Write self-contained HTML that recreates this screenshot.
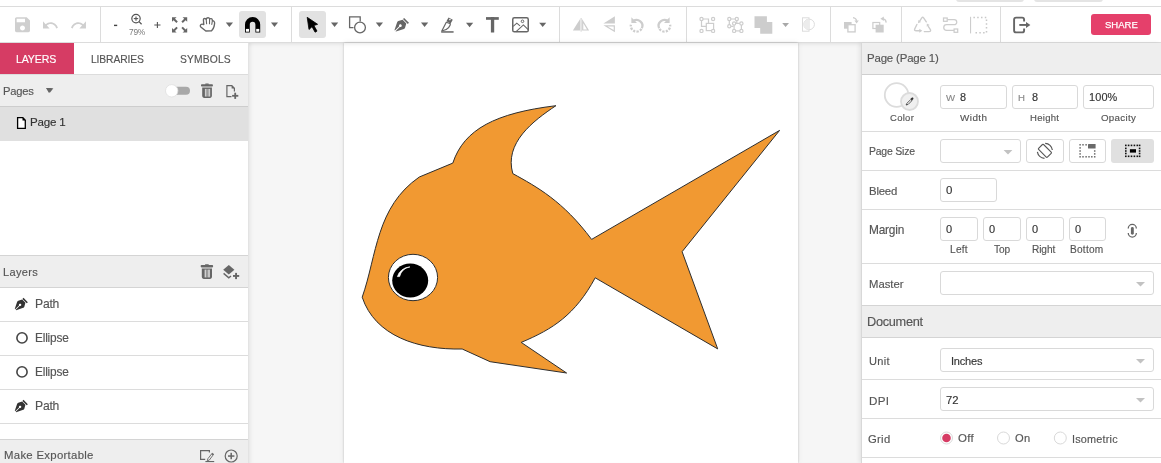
<!DOCTYPE html>
<html><head><meta charset="utf-8">
<style>
*{margin:0;padding:0;box-sizing:border-box}
html,body{width:1161px;height:463px;overflow:hidden;background:#fff;font-family:"Liberation Sans",sans-serif;color:#444}
.a{position:absolute}
.t{position:absolute;white-space:nowrap;line-height:1;will-change:transform;-webkit-text-stroke:0.15px currentColor}
.hl{position:absolute;height:1px;background:#dcdcdc}
.vl{position:absolute;width:1px;background:#dcdcdc}
.car{position:absolute;width:0;height:0;border-left:3.5px solid transparent;border-right:3.5px solid transparent;border-top:5px solid #666}
.inp{position:absolute;border:1px solid #d9d9d9;border-radius:3px;background:#fff}
.sel{position:absolute;border:1px solid #d9d9d9;border-radius:3px;background:#fff}
.sc{position:absolute;width:0;height:0;border-left:5px solid transparent;border-right:5px solid transparent;border-top:5px solid #bbb}
svg{position:absolute;overflow:visible}
</style></head><body>

<!-- top remnants -->
<div class="a" style="left:956px;top:-5px;width:68px;height:6.5px;border-radius:3px;background:#e4e4e4"></div>
<div class="a" style="left:1034px;top:-5px;width:69px;height:6.5px;border-radius:3px;background:#e4e4e4"></div>

<!-- toolbar -->
<div class="hl" style="left:0;top:6px;width:1161px"></div>
<div class="hl" style="left:0;top:42px;width:1161px"></div>
<div class="a" style="left:239px;top:11px;width:27px;height:27px;border-radius:3px;background:#e2e2e2"></div>
<div class="a" style="left:299px;top:11px;width:27px;height:27px;border-radius:3px;background:#e2e2e2"></div>
<div class="vl" style="left:100px;top:7px;height:35px"></div>
<div class="vl" style="left:291px;top:7px;height:35px"></div>
<div class="vl" style="left:559px;top:7px;height:35px"></div>
<div class="vl" style="left:686px;top:7px;height:35px"></div>
<div class="vl" style="left:830px;top:7px;height:35px"></div>
<div class="vl" style="left:901px;top:7px;height:35px"></div>
<div class="vl" style="left:1000px;top:7px;height:35px"></div>



<!-- left panel -->
<div class="a" style="left:0;top:43px;width:248px;height:420px;background:#fff"></div>
<div class="vl" style="left:248px;top:43px;height:420px;background:#e3e3e3"></div>
<div class="a" style="left:0;top:43px;width:74px;height:31px;background:#d63c64"></div>
<div class="hl" style="left:0;top:74px;width:248px"></div>
<div class="a" style="left:0;top:75px;width:248px;height:31px;background:#eeeeee"></div>
<div class="car" style="left:46px;top:88px;border-top-color:#666"></div>
<div class="hl" style="left:0;top:106px;width:248px;background:#cdcdcd"></div>
<div class="a" style="left:0;top:107px;width:248px;height:34px;background:#e0e0e0"></div>

<div class="hl" style="left:0;top:255px;width:248px;background:#d4d4d4"></div>
<div class="a" style="left:0;top:256px;width:248px;height:31px;background:#eeeeee"></div>
<div class="hl" style="left:0;top:287px;width:248px;background:#d4d4d4"></div>
<div class="hl" style="left:0;top:321px;width:248px"></div>
<div class="hl" style="left:0;top:355px;width:248px"></div>
<div class="hl" style="left:0;top:389px;width:248px"></div>
<div class="hl" style="left:0;top:423px;width:248px"></div>
<div class="hl" style="left:0;top:439px;width:248px;background:#d4d4d4"></div>
<div class="a" style="left:0;top:440px;width:248px;height:23px;background:#eeeeee"></div>

<!-- canvas -->
<div class="a" style="left:249px;top:43px;width:612px;height:420px;background:#f6f6f6"></div>
<div class="a" style="left:344px;top:43px;width:454px;height:420px;background:#fff;box-shadow:0 0 2px rgba(0,0,0,0.22),0 0 7px rgba(0,0,0,0.06)"></div>
<div class="a" style="left:249px;top:43px;width:612px;height:420px;box-shadow:inset 0 4px 4px -3px rgba(0,0,0,0.09),inset 4px 0 4px -3px rgba(0,0,0,0.08)"></div>
<svg width="1161" height="463" style="left:0;top:0" viewBox="0 0 1161 463">
<path d="M452.8 163.1 C464 129 496 113 555.9 105.7 C533 121 504 143 512.8 173.6 C537 187 563 201 591.6 239.4 L779.6 130.4 L682.1 251.7 L717.7 348.9 L595.2 277.8 C575 315 553 329 521.2 342.4 L566.6 373 L490.1 361.7 L462.2 349 C418 350 375 336 362.2 297.2 C377 255 376 207 419.3 177 Z" fill="#f19932" stroke="#2e2e2e" stroke-width="1" stroke-linejoin="miter"/>
<ellipse cx="413" cy="277.5" rx="24.6" ry="23.2" fill="#fff" stroke="#2e2e2e" stroke-width="1"/>
<ellipse cx="410.2" cy="280.5" rx="18" ry="17" fill="#000"/>
<path d="M397.4 276.6 A13.6 13.6 0 0 1 409.9 266.9 A13 13 0 0 0 399.6 276.6 Z" fill="#fff" stroke="#fff" stroke-width="0.7" stroke-linejoin="round"/>
</svg>

<!-- right panel -->
<div class="a" style="left:861px;top:43px;width:300px;height:420px;background:#fff;box-shadow:-2px 0 4px rgba(0,0,0,0.07)"></div>
<div class="vl" style="left:861px;top:43px;height:420px;background:#d8d8d8"></div>
<div class="a" style="left:862px;top:43px;width:299px;height:31px;background:#eeeeee"></div>
<div class="hl" style="left:862px;top:74px;width:299px;background:#cfcfcf"></div>

<div class="inp" style="left:940px;top:85px;width:67px;height:24px"></div>
<div class="inp" style="left:1012px;top:85px;width:66px;height:24px"></div>
<div class="inp" style="left:1083px;top:85px;width:71px;height:24px"></div>
<div class="hl" style="left:862px;top:131px;width:299px"></div>

<div class="sel" style="left:940px;top:139px;width:81px;height:24px"></div>
<div class="inp" style="left:1026px;top:139px;width:38px;height:24px"></div>
<div class="inp" style="left:1069px;top:139px;width:37px;height:24px"></div>
<div class="a" style="left:1111px;top:139px;width:43px;height:24px;border-radius:3px;background:#e0e0e0"></div>
<div class="hl" style="left:862px;top:170px;width:299px"></div>

<div class="inp" style="left:940px;top:178px;width:57px;height:24px"></div>
<div class="hl" style="left:862px;top:209px;width:299px"></div>

<div class="inp" style="left:940px;top:217px;width:38px;height:24px"></div>
<div class="inp" style="left:983px;top:217px;width:38px;height:24px"></div>
<div class="inp" style="left:1026px;top:217px;width:38px;height:24px"></div>
<div class="inp" style="left:1069px;top:217px;width:37px;height:24px"></div>
<div class="hl" style="left:862px;top:263px;width:299px"></div>

<div class="sel" style="left:940px;top:271px;width:214px;height:24px"></div>
<div class="hl" style="left:862px;top:305px;width:299px;background:#d4d4d4"></div>
<div class="a" style="left:862px;top:306px;width:299px;height:31px;background:#eeeeee"></div>
<div class="hl" style="left:862px;top:337px;width:299px;background:#d4d4d4"></div>

<div class="sel" style="left:940px;top:348px;width:214px;height:24px"></div>
<div class="hl" style="left:862px;top:379px;width:299px"></div>
<div class="sel" style="left:940px;top:387px;width:214px;height:24px"></div>
<div class="hl" style="left:862px;top:418px;width:299px"></div>
<div class="hl" style="left:862px;top:457px;width:299px"></div>

<!-- share -->
<div class="a" style="left:1091px;top:14px;width:60px;height:21px;border-radius:3px;background:#e5406b"></div>


<div class="t" style="left:16.15px;top:54.04px;font-size:10.58px;letter-spacing:-0.15px;color:#fff;">LAYERS</div>
<div class="t" style="left:91.38px;top:54.6px;font-size:10.29px;letter-spacing:-0.11px;color:#555;">LIBRARIES</div>
<div class="t" style="left:179.59px;top:54.6px;font-size:10.29px;letter-spacing:0.17px;color:#555;">SYMBOLS</div>
<div class="t" style="left:3.4px;top:85.83px;font-size:11.19px;letter-spacing:-0.2px;color:#555;">Pages</div>
<div class="t" style="left:30.23px;top:117.45px;font-size:11.57px;letter-spacing:-0.2px;color:#333;">Page 1</div>
<div class="t" style="left:3.41px;top:267.13px;font-size:11.07px;letter-spacing:0.30px;color:#555;">Layers</div>
<div class="t" style="left:34.63px;top:298.03px;font-size:12.13px;letter-spacing:-0.2px;color:#555;">Path</div>
<div class="t" style="left:34.65px;top:332.9px;font-size:11.87px;letter-spacing:-0.2px;color:#555;">Ellipse</div>
<div class="t" style="left:34.65px;top:366.9px;font-size:11.87px;letter-spacing:-0.2px;color:#555;">Ellipse</div>
<div class="t" style="left:34.63px;top:400.03px;font-size:12.13px;letter-spacing:-0.2px;color:#555;">Path</div>
<div class="t" style="left:3.79px;top:449.98px;font-size:11.37px;letter-spacing:0.30px;color:#555;">Make Exportable</div>
<div class="t" style="left:866.78px;top:53.41px;font-size:11.45px;letter-spacing:-0.17px;color:#555;">Page (Page 1)</div>
<div class="t" style="left:890.13px;top:113.10px;font-size:9.46px;letter-spacing:0.30px;color:#555;">Color</div>
<div class="t" style="left:946.3px;top:93.0px;font-size:9.6px;letter-spacing:0px;color:#888;">W</div>
<div class="t" style="left:960.4px;top:91.6px;font-size:10.9px;letter-spacing:0.00px;color:#333;">8</div>
<div class="t" style="left:1018.2px;top:93.0px;font-size:9.6px;letter-spacing:0px;color:#888;">H</div>
<div class="t" style="left:1032.4px;top:91.6px;font-size:10.9px;letter-spacing:0.00px;color:#333;">8</div>
<div class="t" style="left:1088.6px;top:91.6px;font-size:10.9px;letter-spacing:0.15px;color:#333;">100%</div>
<div class="t" style="left:960.1px;top:112.9px;font-size:9.9px;letter-spacing:0.45px;color:#555;">Width</div>
<div class="t" style="left:1029.74px;top:113.03px;font-size:9.53px;letter-spacing:0.30px;color:#555;">Height</div>
<div class="t" style="left:1101.01px;top:112.86px;font-size:9.73px;letter-spacing:0.30px;color:#555;">Opacity</div>
<div class="t" style="left:869.33px;top:147.26px;font-size:10.44px;letter-spacing:-0.2px;color:#555;">Page Size</div>
<div class="t" style="left:868.69px;top:185.8px;font-size:11.36px;letter-spacing:-0.2px;color:#555;">Bleed</div>
<div class="t" style="left:945.66px;top:185.11px;font-size:11.45px;letter-spacing:0.00px;color:#333;">0</div>
<div class="t" style="left:868.65px;top:224.74px;font-size:11.88px;letter-spacing:-0.2px;color:#555;">Margin</div>
<div class="t" style="left:945.67px;top:223.98px;font-size:11.01px;letter-spacing:0.00px;color:#333;">0</div>
<div class="t" style="left:988.67px;top:223.98px;font-size:11.01px;letter-spacing:0.00px;color:#333;">0</div>
<div class="t" style="left:1031.67px;top:223.98px;font-size:11.01px;letter-spacing:0.00px;color:#333;">0</div>
<div class="t" style="left:1074.67px;top:223.98px;font-size:11.01px;letter-spacing:0.00px;color:#333;">0</div>
<div class="t" style="left:949.89px;top:244.91px;font-size:10.14px;letter-spacing:0.26px;color:#555;">Left</div>
<div class="t" style="left:993.80px;top:244.91px;font-size:10.14px;letter-spacing:-0.09px;color:#555;">Top</div>
<div class="t" style="left:1032.39px;top:244.91px;font-size:10.14px;letter-spacing:-0.10px;color:#555;">Right</div>
<div class="t" style="left:1070.49px;top:244.91px;font-size:10.14px;letter-spacing:0.24px;color:#555;">Bottom</div>
<div class="t" style="left:868.70px;top:278.93px;font-size:11.30px;letter-spacing:0.00px;color:#555;">Master</div>
<div class="t" style="left:866.68px;top:316.4px;font-size:12.75px;letter-spacing:-0.30px;color:#555;">Document</div>
<div class="t" style="left:868.93px;top:355.65px;font-size:11.05px;letter-spacing:0.30px;color:#555;">Unit</div>
<div class="t" style="left:951.01px;top:355.68px;font-size:11.01px;letter-spacing:-0.19px;color:#333;">Inches</div>
<div class="t" style="left:868.6px;top:394.78px;font-size:11.61px;letter-spacing:0.30px;color:#555;">DPI</div>
<div class="t" style="left:945.9px;top:395px;font-size:11.3px;letter-spacing:0px;color:#333;">72</div>
<div class="t" style="left:868.24px;top:433.66px;font-size:11.27px;letter-spacing:0.30px;color:#555;">Grid</div>
<div class="t" style="left:958.24px;top:433.06px;font-size:11.51px;letter-spacing:0.30px;color:#555;">Off</div>
<div class="t" style="left:1015.05px;top:433.36px;font-size:11.15px;letter-spacing:0.30px;color:#555;">On</div>
<div class="t" style="left:1071.52px;top:433.60px;font-size:10.87px;letter-spacing:0.20px;color:#555;">Isometric</div>
<div class="t" style="left:1104.5px;top:20.2px;font-size:9.5px;letter-spacing:0.02px;color:#fff;-webkit-text-stroke:0.25px #fff;">SHARE</div>
<div class="t" style="left:128.8px;top:28.1px;font-size:8.4px;letter-spacing:-0.25px;color:#7a7a7a;-webkit-text-stroke:0">79%</div>
<svg width="1161" height="463" style="left:0;top:0;pointer-events:none" viewBox="0 0 1161 463">
<!-- save -->
<path transform="translate(12.5,14.7) scale(0.833)" fill="#cfcfcf" d="M17 3H5c-1.11 0-2 .9-2 2v14c0 1.1.89 2 2 2h14c1.1 0 2-.9 2-2V7l-4-4zm-5 16c-1.66 0-3-1.34-3-3s1.34-3 3-3 3 1.34 3 3-1.34 3-3 3zm3-10H5V5h10v4z"/>
<!-- undo -->
<path transform="translate(41.54,15.9) scale(0.73,0.78)" fill="#cfcfcf" d="M12.5 8c-2.65 0-5.05.99-6.9 2.6L2 7v9h9l-3.62-3.62c1.39-1.16 3.16-1.88 5.12-1.88 3.54 0 6.550 2.31 7.6 5.5l2.37-.78C21.08 11.03 17.15 8 12.5 8z"/>
<!-- redo -->
<path transform="translate(69.88,15.9) scale(0.73,0.78)" fill="#cfcfcf" d="M18.4 10.6C16.55 8.99 14.15 8 11.5 8c-4.65 0-8.58 3.030-9.96 7.22L3.9 16c1.05-3.19 4.05-5.5 7.6-5.5 1.95 0 3.73.72 5.12 1.88L13 16h9V7l-3.6 3.6z"/>
<!-- minus / zoom / plus -->
<rect x="114" y="24.7" width="3.2" height="1.4" fill="#444"/>
<circle cx="136" cy="18.6" r="4.2" fill="none" stroke="#555" stroke-width="1.2"/>
<line x1="139" y1="21.6" x2="141.6" y2="24.2" stroke="#555" stroke-width="1.3"/>
<line x1="133.8" y1="18.6" x2="138.2" y2="18.6" stroke="#555" stroke-width="1.1"/>
<line x1="136" y1="16.4" x2="136" y2="20.8" stroke="#555" stroke-width="1.1"/>
<line x1="154.3" y1="25" x2="160.5" y2="25" stroke="#555" stroke-width="1"/>
<line x1="157.4" y1="22" x2="157.4" y2="28" stroke="#555" stroke-width="1.1"/>
<!-- fullscreen -->
<g fill="#666">
<path d="M172 17.2h4.6l-1.6 1.6 2.8 2.8-1.4 1.4-2.8-2.8-1.6 1.6z"/>
<path d="M187.2 17.2h-4.6l1.6 1.6-2.8 2.8 1.4 1.4 2.8-2.8 1.6 1.6z"/>
<path d="M172 32.5h4.6l-1.6-1.6 2.8-2.8-1.4-1.4-2.8 2.8-1.6-1.6z"/>
<path d="M187.2 32.5h-4.6l1.6-1.6-2.8-2.8 1.4-1.4 2.8 2.8 1.6-1.6z"/>
</g>
<!-- hand -->
<path d="M203.8 24.6 L203.4 19.8 Q203.4 18.4 204.8 18.3 Q206 18.3 206.2 19.4 L206.3 18.8 Q206.6 17.7 208 17.7 Q209.4 17.8 209.6 19 Q210.2 18.5 211.2 18.7 Q212.4 19 212.4 20.5 Q213.2 20.8 213.9 21.3 Q214.8 22 214.6 23.4 L214.2 26 Q213.6 28.8 211.4 30.9 L205.8 31 L200.8 26.9 Q199.8 25.9 200.6 24.9 Q201.6 23.8 203 24.3 Z" fill="none" stroke="#666" stroke-width="1.35" stroke-linejoin="round"/>
<path d="M206.2 19.4 L206.6 23.8 M209.6 19 L209.5 23.8 M212.4 20.5 L211.8 24.4" fill="none" stroke="#666" stroke-width="1.1" stroke-linecap="round"/>
<!-- carets -->
<g fill="#666">
<path d="M225.8 22.6h7.2l-3.6 4.5z"/>
<path d="M271 22.6h7l-3.5 4.5z"/>
<path d="M331 22.6h7.2l-3.6 4.5z"/>
<path d="M375.8 22.6h7.2l-3.6 4.5z"/>
<path d="M421 22.6h7.2l-3.6 4.5z"/>
<path d="M466 22.8h7.2l-3.6 4.5z"/>
<path d="M539.2 22.8h7l-3.5 4.2z"/>
</g>
<path d="M782.2 22.9h6.8l-3.4 4.2z" fill="#a8a8a8"/>
<!-- magnet -->
<path d="M245 32.5 V24.6 A7.6 7.6 0 0 1 260.2 24.6 V32.5 H255.4 V24.6 A2.8 2.8 0 0 0 249.8 24.6 V32.5 Z" fill="#000"/>
<rect x="245.9" y="28.9" width="3.1" height="2.8" fill="#fff"/>
<rect x="256.2" y="28.9" width="3.1" height="2.8" fill="#fff"/>
<!-- select arrow -->
<path d="M307.2 17.3 L317.6 24.3 L313.9 25.5 L317 31.1 L315.1 32.2 L312 26.7 L309 29.5 Z" fill="#000" stroke="#000" stroke-width="0.8" stroke-linejoin="round"/>
<!-- shape -->
<path d="M353.5 27.6 H349.6 V16.9 H360.2 V21.6" fill="none" stroke="#666" stroke-width="1.3"/>
<circle cx="360" cy="27.5" r="5.4" fill="none" stroke="#666" stroke-width="1.3"/>
<!-- pen nib -->
<g transform="translate(394.5,17.1) scale(0.0283)">
<path fill="#666" transform="rotate(0)" d="M136.6 138.79a64.003 64.003 0 0 0-43.31 41.35L0 460l14.69 14.69L164.8 324.58c-2.99-6.26-4.8-13.18-4.8-20.58 0-26.51 21.49-48 48-48s48 21.49 48 48-21.490 48-48 48c-7.4 0-14.32-1.81-20.58-4.8L37.31 497.31 52 512l279.86-93.29a64.003 64.003 0 0 0 41.35-43.31L416 224 288 96l-151.4 42.79z"/>
<path fill="#666" d="M340 30 L510 200 L470 240 L300 70 Z"/>
</g>
<!-- knife -->
<g fill="none" stroke="#666" stroke-width="1.2" stroke-linejoin="round">
<path d="M446.3 22.3 L441.8 31 C444.5 30.6 447 29.6 448.6 27.6 C449.8 26.1 450.4 24.6 450.4 23.8 Z"/>
</g>
<path d="M448.6 17.4 L452.8 19.8 L450.6 23.6 L446.4 21.2 Z" fill="#666"/>
<circle cx="449.9" cy="19.6" r="0.8" fill="#fff"/>
<rect x="441.2" y="31.2" width="12.4" height="1.5" fill="#666"/>
<!-- T -->
<rect x="486" y="17.1" width="12.8" height="2.7" fill="#666"/>
<rect x="490.9" y="17.1" width="3.3" height="15.4" fill="#666"/>
<!-- image -->
<rect x="512.75" y="17.85" width="15.5" height="13.9" rx="1.6" fill="none" stroke="#666" stroke-width="1.5"/>
<path d="M513.2 26.3 L516.8 23.2 L520 25.9" fill="none" stroke="#666" stroke-width="1.1"/>
<path d="M515.8 31.8 L523.4 24.9 L528.2 29.6" fill="none" stroke="#666" stroke-width="1.1"/>
<circle cx="522.5" cy="21.3" r="1.3" fill="none" stroke="#666" stroke-width="1"/>
<!-- flip h -->
<g fill="#cdcdcd">
<path d="M572.9 30.6 L580.1 19 V30.6 Z"/>
<rect x="580.6" y="18" width="1" height="13.6"/>
<path d="M582.1 19 L589.1 30.6 H582.1 Z M583.3 23.2 V29.4 H587 Z" fill-rule="evenodd"/>
<!-- flip v -->
<path d="M603.4 23.4 L614.9 16.3 V23.4 Z"/>
<path d="M603.4 25.2 H614.9 V32.2 Z M607.6 26.4 L613.7 30.1 V26.4 Z" fill-rule="evenodd"/>
</g>
<!-- rotate ccw / cw -->
<g id="rot">
<path d="M633.27 21.05 A5.8 5.8 0 0 1 641.86 28.25" fill="none" stroke="#cdcdcd" stroke-width="2.3"/>
<path d="M641.86 28.25 A5.8 5.8 0 0 1 630.89 24.79" fill="none" stroke="#cdcdcd" stroke-width="2.3" stroke-dasharray="2.2 1.3" stroke-dashoffset="-0.8"/>
<path d="M631.4 17.3 V22.9 H637 Z" fill="#cdcdcd"/>
</g>
<g transform="translate(1301,0) scale(-1,1)">
<path d="M633.27 21.05 A5.8 5.8 0 0 1 641.86 28.25" fill="none" stroke="#cdcdcd" stroke-width="2.3"/>
<path d="M641.86 28.25 A5.8 5.8 0 0 1 630.89 24.79" fill="none" stroke="#cdcdcd" stroke-width="2.3" stroke-dasharray="2.2 1.3" stroke-dashoffset="-0.8"/>
<path d="M631.4 17.3 V22.9 H637 Z" fill="#cdcdcd"/>
</g>
<!-- group -->
<g fill="none" stroke="#cdcdcd" stroke-width="1.2">
<path d="M701.5 19 H708.5 V23.4 M701.5 19 V26.3 H706.3"/>
<rect x="706.3" y="23.4" width="7.3" height="7.2"/>
<circle cx="701.5" cy="19" r="1.6" fill="#fff"/>
<circle cx="713.1" cy="19" r="1.6" fill="#fff"/>
<circle cx="701.5" cy="30.9" r="1.6" fill="#fff"/>
<circle cx="713.1" cy="30.9" r="1.6" fill="#fff"/>
<!-- ungroup -->
<path d="M729.3 19 H736.8 V23 M729.3 19 V26.3 H733.5"/>
<rect x="734.1" y="23.4" width="7.3" height="7.5"/>
<circle cx="729.3" cy="19" r="1.6" fill="#fff"/>
<circle cx="736.8" cy="19" r="1.6" fill="#fff"/>
<circle cx="729.3" cy="26.3" r="1.6" fill="#fff"/>
<circle cx="734.1" cy="23.4" r="1.6" fill="#fff"/>
<circle cx="741.4" cy="23.4" r="1.6" fill="#fff"/>
<circle cx="734.1" cy="30.9" r="1.6" fill="#fff"/>
<circle cx="741.4" cy="30.9" r="1.6" fill="#fff"/>
</g>
<!-- boolean -->
<path d="M754.5 16.2 H766.9 V21.9 H772.3 V33.7 H760.2 V28 H754.5 Z" fill="#cdcdcd"/>
<!-- mask -->
<rect x="802.5" y="17.8" width="6.5" height="13.4" fill="none" stroke="#dcdcdc" stroke-width="1"/>
<circle cx="809.1" cy="24.4" r="5.3" fill="none" stroke="#dcdcdc" stroke-width="1"/>
<path d="M809.1 19.1 A5.3 5.3 0 0 0 809.1 29.7 Z" fill="#ececec"/>
<!-- bring front -->
<rect x="844" y="22" width="7.6" height="6.7" fill="#cdcdcd"/>
<rect x="847.9" y="24.7" width="7.2" height="7.2" fill="#fff" stroke="#cdcdcd" stroke-width="1.3"/>
<path d="M853 17.7 Q856.2 18.1 856.6 20.8" fill="none" stroke="#cdcdcd" stroke-width="1.2"/>
<path d="M854.4 20.4 L858.8 20.4 L856.6 23.4 Z" fill="#cdcdcd"/>
<!-- send back -->
<rect x="872.9" y="22.5" width="6.8" height="6" fill="#fff" stroke="#cdcdcd" stroke-width="1.2"/>
<rect x="875.6" y="24.7" width="8.1" height="7.8" fill="#cdcdcd"/>
<path d="M886.2 22.6 Q886 19.4 883 18.9" fill="none" stroke="#cdcdcd" stroke-width="1.2"/>
<path d="M880.4 18.7 L883.8 16.6 L883.8 20.9 Z" fill="#cdcdcd"/>
<!-- recycle -->
<g stroke="#cdcdcd" stroke-width="1.4" fill="none" stroke-linecap="round" stroke-linejoin="round">
<path d="M926.3 21.8 L923.6 17.8 Q922.7 16.6 921.8 17.8 L919.8 20.8"/>
<path d="M928.4 26.6 L930.4 29.6 Q931.2 31.6 928.9 31.6 L924.3 31.6"/>
<path d="M916.9 24.5 L914.7 29 Q914 30.7 916.2 30.7 L919.5 30.7"/>
</g>
<g fill="#cdcdcd">
<path d="M921.04 22.05 L918.36 19.95 L918.0 23.2 Z"/>
<path d="M929.66 25.0 L926.74 26.8 L926.8 23.4 Z"/>
<path d="M919.3 28.7 L919.3 32.7 L922.3 30.7 Z"/>
</g>
<!-- connector -->
<g fill="none" stroke="#cdcdcd" stroke-width="1.25">
<rect x="943.5" y="18" width="3.7" height="3.3"/>
<rect x="954.1" y="29" width="3.6" height="3.3"/>
<path d="M947.2 19.6 H954.2 A2.55 2.55 0 0 1 954.2 24.7 H946.6 A2.85 2.85 0 0 0 946.6 30.4 H954.1"/>
</g>
<!-- artboard -->
<rect x="970" y="16.8" width="1.1" height="16.6" fill="#cdcdcd"/>
<path d="M973.4 17.4 H986.5 V32.8 H973.4" fill="none" stroke="#c8c8c8" stroke-width="1.5" stroke-dasharray="1.5 2.3"/>
<!-- exit -->
<path d="M1024.1 21.6 V19.6 A2 2 0 0 0 1022.1 17.6 H1016.1 A2 2 0 0 0 1014.1 19.6 V30.4 A2 2 0 0 0 1016.1 32.4 H1022.1 A2 2 0 0 0 1024.1 30.4 V28.4" fill="none" stroke="#666" stroke-width="1.9"/>
<rect x="1019.3" y="24" width="7.5" height="1.9" fill="#666"/>
<path d="M1026 21.9 V27.9 L1030.4 24.9 Z" fill="#666"/>

<!-- left panel icons -->
<path d="M46.3 88.2 H53.4 L49.85 92.7 Z" fill="#666"/>
<rect x="170" y="86.8" width="20" height="8" rx="4" fill="#a8a8a8"/>
<circle cx="171.7" cy="90.8" r="6.2" fill="#fff" stroke="#dedede" stroke-width="0.8"/>
<!-- trash -->
<g id="trash">
<rect x="201" y="84.2" width="11.9" height="2.4" rx="0.8" fill="#666"/>
<path d="M202.2 87.6 H211.9 V95.6 C211.9 97 211.1 97.9 209.8 97.9 H204.3 C203 97.9 202.2 97 202.2 95.6 Z" fill="#666"/>
<rect x="204.9" y="88.9" width="1.8" height="7.6" fill="#d0d0d0"/>
<rect x="206.7" y="88.9" width="1.7" height="7.6" fill="#9a9a9a"/>
<rect x="208.4" y="88.9" width="1.8" height="7.6" fill="#d0d0d0"/>
<rect x="205.2" y="83.4" width="3.6" height="1.4" rx="0.5" fill="#666"/>
</g>
<!-- new page -->
<path d="M231.5 96.6 H226.9 V85.6 H231.8 L234.4 88.3 V91.6" fill="none" stroke="#666" stroke-width="1.2"/>
<path d="M231.6 85.2 L234.8 88.4 H231.6 Z" fill="#666"/>
<rect x="232.1" y="94.9" width="6.2" height="1.8" fill="#666"/>
<rect x="234.3" y="92.7" width="1.8" height="6.2" fill="#666"/>
<!-- doc -->
<path d="M17.6 117.6 H22.8 L25.3 120.2 V128.3 H17.6 Z" fill="#fff" stroke="#000" stroke-width="1.3" stroke-linejoin="miter"/>
<path d="M22.5 117 L25.9 120.5 H22.5 Z" fill="#000"/>
<!-- layers header trash -->
<rect x="200.7" y="265" width="12.4" height="2.4" rx="0.8" fill="#666"/>
<path d="M201.8 268.4 H212 V276.6 C212 278 211.2 278.9 209.9 278.9 H203.9 C202.6 278.9 201.8 278 201.8 276.6 Z" fill="#666"/>
<rect x="204.6" y="269.6" width="1.8" height="7.8" fill="#d0d0d0"/>
<rect x="206.4" y="269.6" width="1.7" height="7.8" fill="#9a9a9a"/>
<rect x="208.1" y="269.6" width="1.8" height="7.8" fill="#d0d0d0"/>
<rect x="205" y="264.2" width="3.8" height="1.4" rx="0.5" fill="#666"/>
<!-- layers add -->
<path d="M228.8 265.1 L234.4 269.8 L228.8 274.4 L223.2 269.8 Z" fill="#666"/>
<path d="M223.6 273.4 L228.8 277.8 L231 276" fill="none" stroke="#666" stroke-width="1.4"/>
<rect x="233" y="275" width="6.2" height="1.9" fill="#666"/>
<rect x="235.1" y="272.9" width="1.9" height="6.2" fill="#666"/>
<!-- layer rows -->
<g id="nib1" transform="translate(14.8,297.1) scale(0.0255)">
<path fill="#333" d="M136.6 138.79a64.003 64.003 0 0 0-43.31 41.35L0 460l14.69 14.69L164.8 324.58c-2.99-6.26-4.8-13.18-4.8-20.58 0-26.51 21.49-48 48-48s48 21.49 48 48-21.490 48-48 48c-7.4 0-14.32-1.81-20.58-4.8L37.31 497.31 52 512l279.86-93.29a64.003 64.003 0 0 0 41.35-43.31L416 224 288 96l-151.4 42.79z"/>
<path fill="#333" d="M340 30 L510 200 L470 240 L300 70 Z"/>
</g>
<circle cx="22" cy="337.9" r="5.1" fill="none" stroke="#444" stroke-width="1.6"/>
<circle cx="22" cy="371.9" r="5.1" fill="none" stroke="#444" stroke-width="1.6"/>
<g transform="translate(14.8,399.1) scale(0.0255)">
<path fill="#333" d="M136.6 138.79a64.003 64.003 0 0 0-43.31 41.35L0 460l14.69 14.69L164.8 324.58c-2.99-6.26-4.8-13.18-4.8-20.58 0-26.51 21.49-48 48-48s48 21.49 48 48-21.490 48-48 48c-7.4 0-14.32-1.81-20.58-4.8L37.31 497.31 52 512l279.86-93.29a64.003 64.003 0 0 0 41.35-43.31L416 224 288 96l-151.4 42.79z"/>
<path fill="#333" d="M340 30 L510 200 L470 240 L300 70 Z"/>
</g>
<!-- export icons -->
<path d="M205.2 459.4 H200.6 V450.6 H209.4 V452.6" fill="none" stroke="#666" stroke-width="1.2"/>
<path d="M212.2 453.2 L213.7 454.2 L209.4 460 L207.3 460.9 L207.8 458.8 Z" fill="none" stroke="#666" stroke-width="0.9" stroke-linejoin="round"/>
<path d="M212.2 453.2 L213.7 454.2 L212.9 455.3 L211.4 454.3 Z" fill="#666"/>
<rect x="205.4" y="461" width="8.8" height="1.1" fill="#666"/>
<circle cx="231.2" cy="456" r="6" fill="none" stroke="#666" stroke-width="1.2"/>
<rect x="228" y="455.3" width="6.4" height="1.5" fill="#666"/>
<rect x="230.45" y="452.8" width="1.5" height="6.4" fill="#666"/>

<!-- right panel icons -->
<circle cx="896.6" cy="95" r="11.8" fill="#fff" stroke="#dcdcdc" stroke-width="1.8"/>
<circle cx="909.5" cy="101.5" r="8.5" fill="#f0f0f0" stroke="#dcdcdc" stroke-width="1.8"/>
<g transform="translate(909.5,101.5) scale(0.82) translate(-909.5,-101.5)">
<path d="M905.3 105.8 L906.5 103.6 L911 99.1 L912.4 100.5 L907.9 105 Z" fill="#fff" stroke="#333" stroke-width="1" stroke-linejoin="round"/>
<path d="M910.6 98.4 L912.2 96.9 C912.7 96.4 913.5 96.4 914 96.9 C914.5 97.4 914.5 98.2 914 98.7 L912.5 100.3 Z" fill="#333"/>
</g>
<!-- page size carets -->
<path d="M1003.6 150 H1012.4 L1008 154.4 Z" fill="#c2c2c2"/>
<path d="M1136 282 H1145 L1140.5 286.4 Z" fill="#c2c2c2"/>
<path d="M1136 359 H1145 L1140.5 363.4 Z" fill="#c2c2c2"/>
<path d="M1136 398 H1145 L1140.5 402.4 Z" fill="#c2c2c2"/>
<!-- orientation -->
<g transform="translate(1044.9,150.8)">
<rect x="-3.5" y="-6.2" width="7" height="12.4" rx="0.8" transform="rotate(-45)" fill="none" stroke="#555" stroke-width="1.1"/>
<path d="M0.3 -7.5 A7.5 7.5 0 0 1 7.45 -0.8" fill="none" stroke="#555" stroke-width="1.2"/>
<path d="M-7.5 1.1 A7.5 7.5 0 0 0 -0.4 7.5" fill="none" stroke="#555" stroke-width="1.2"/>
</g>
<g fill="#6a6a6a"><rect x="1079.35" y="144.05" width="1.5" height="1.5"/><rect x="1082.25" y="144.05" width="1.5" height="1.5"/><rect x="1085.35" y="144.05" width="1.5" height="1.5"/><rect x="1079.35" y="147.15" width="1.5" height="1.5"/><rect x="1079.35" y="150.25" width="1.5" height="1.5"/><rect x="1079.35" y="153.15" width="1.5" height="1.5"/><rect x="1079.35" y="156.05" width="1.5" height="1.5"/><rect x="1082.25" y="156.05" width="1.5" height="1.5"/><rect x="1085.35" y="156.05" width="1.5" height="1.5"/><rect x="1088.25" y="156.05" width="1.5" height="1.5"/><rect x="1091.05" y="156.05" width="1.5" height="1.5"/><rect x="1093.95" y="156.05" width="1.5" height="1.5"/><rect x="1093.95" y="150.25" width="1.5" height="1.5"/><rect x="1093.95" y="153.15" width="1.5" height="1.5"/></g>
<rect x="1088" y="143.9" width="7.6" height="4.7" rx="0.5" fill="#6a6a6a"/>
<g fill="#111"><rect x="1125.00" y="144.60" width="1.6" height="1.6"/><rect x="1125.00" y="155.50" width="1.6" height="1.6"/><rect x="1127.80" y="144.60" width="1.6" height="1.6"/><rect x="1127.80" y="155.50" width="1.6" height="1.6"/><rect x="1130.70" y="144.60" width="1.6" height="1.6"/><rect x="1130.70" y="155.50" width="1.6" height="1.6"/><rect x="1133.60" y="144.60" width="1.6" height="1.6"/><rect x="1133.60" y="155.50" width="1.6" height="1.6"/><rect x="1136.50" y="144.60" width="1.6" height="1.6"/><rect x="1136.50" y="155.50" width="1.6" height="1.6"/><rect x="1138.80" y="144.60" width="1.6" height="1.6"/><rect x="1138.80" y="155.50" width="1.6" height="1.6"/><rect x="1125.00" y="147.60" width="1.6" height="1.6"/><rect x="1138.80" y="147.60" width="1.6" height="1.6"/><rect x="1125.00" y="150.20" width="1.6" height="1.6"/><rect x="1138.80" y="150.20" width="1.6" height="1.6"/><rect x="1125.00" y="152.70" width="1.6" height="1.6"/><rect x="1138.80" y="152.70" width="1.6" height="1.6"/></g>
<rect x="1129.9" y="149.2" width="6.1" height="3.4" fill="#000"/>
<!-- link -->
<path d="M1128.25 228.5 A4.05 4.05 0 0 1 1136.35 228.5" fill="none" stroke="#666" stroke-width="1.3"/>
<path d="M1128.25 233 A4.05 4.05 0 0 0 1136.35 233" fill="none" stroke="#666" stroke-width="1.3"/>
<rect x="1130.9" y="227" width="2.9" height="7.8" rx="1.45" fill="#666"/>
<!-- radios -->
<circle cx="946.5" cy="438" r="6" fill="#fff" stroke="#d8d8d8" stroke-width="1"/>
<circle cx="946.5" cy="438" r="4.3" fill="#d63c64"/>
<circle cx="1003.5" cy="438" r="6" fill="#fff" stroke="#d8d8d8" stroke-width="1"/>
<circle cx="1060.3" cy="438" r="6" fill="#fff" stroke="#d8d8d8" stroke-width="1"/>
</svg>

</body></html>
